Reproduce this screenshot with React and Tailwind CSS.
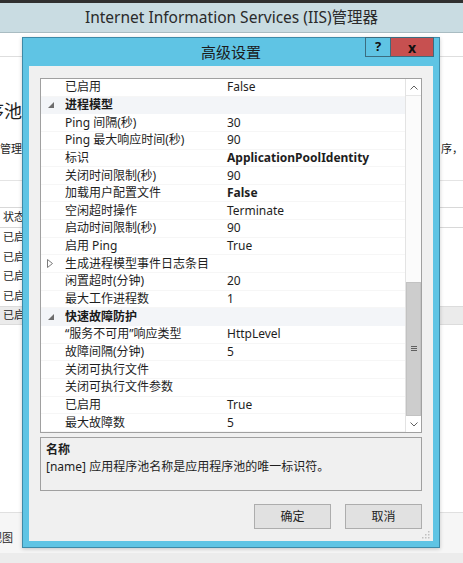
import React from 'react';

const rows = [
  { k: '已启用', v: 'False' },
  { cat: '进程模型' },
  { k: 'Ping 间隔(秒)', v: '30' },
  { k: 'Ping 最大响应时间(秒)', v: '90' },
  { k: '标识', v: 'ApplicationPoolIdentity', bold: true },
  { k: '关闭时间限制(秒)', v: '90' },
  { k: '加载用户配置文件', v: 'False', bold: true },
  { k: '空闲超时操作', v: 'Terminate' },
  { k: '启动时间限制(秒)', v: '90' },
  { k: '启用 Ping', v: 'True' },
  { k: '生成进程模型事件日志条目', collapsed: true },
  { k: '闲置超时(分钟)', v: '20' },
  { k: '最大工作进程数', v: '1' },
  { cat: '快速故障防护' },
  { k: '“服务不可用”响应类型', v: 'HttpLevel' },
  { k: '故障间隔(分钟)', v: '5' },
  { k: '关闭可执行文件', v: '' },
  { k: '关闭可执行文件参数', v: '' },
  { k: '已启用', v: 'True' },
  { k: '最大故障数', v: '5' },
];

function ExpandedGlyph() {
  return (
    <svg width="6" height="6" viewBox="0 0 6 6" className="block">
      <polygon points="6,0 6,6 0,6" fill="#6d6d6d" />
    </svg>
  );
}

function CollapsedGlyph() {
  return (
    <svg width="6" height="9" viewBox="0 0 6 9" className="block">
      <polygon points="0.5,0.5 5.5,4.5 0.5,8.5" fill="none" stroke="#7a7a7a" strokeWidth="1" />
    </svg>
  );
}

function PropRow({ row }) {
  if (row.cat) {
    return (
      <div className="h-[17.65px] flex items-center bg-[#f3f5f8]">
        <div className="w-[24px] flex justify-end pr-[11px]">
          <ExpandedGlyph />
        </div>
        <span className="font-bold text-[#1a1a1a]">{row.cat}</span>
      </div>
    );
  }
  return (
    <div className="h-[17.65px] flex items-center border-b border-[#f6f6f6]">
      <div className="w-[24px] flex justify-end pr-[12px]">
        {row.collapsed && <CollapsedGlyph />}
      </div>
      <div className="w-[162px] whitespace-nowrap">{row.k}</div>
      <div className={`whitespace-nowrap ${row.bold ? 'font-bold' : ''}`}>{row.v}</div>
    </div>
  );
}

function Scrollbar() {
  return (
    <div className="w-[16px] flex flex-col border-l border-[#e3e3e3] bg-[#fbfbfb]">
      <div className="h-[17px] flex items-center justify-center bg-white border-b border-[#e6e6e6]">
        <svg width="8" height="5" viewBox="0 0 8 5">
          <polyline points="0.5,4.5 4,1 7.5,4.5" fill="none" stroke="#606060" strokeWidth="1" />
        </svg>
      </div>
      <div className="h-[186px]" />
      <div className="flex-1 bg-[#cdcdcd] border border-[#c2c2c2] flex items-center justify-center">
        <svg width="6" height="6" viewBox="0 0 6 6">
          <line x1="0" y1="0.5" x2="6" y2="0.5" stroke="#606060" />
          <line x1="0" y1="2.5" x2="6" y2="2.5" stroke="#606060" />
          <line x1="0" y1="4.5" x2="6" y2="4.5" stroke="#606060" />
        </svg>
      </div>
      <div className="h-[16px] flex items-center justify-center bg-white">
        <svg width="8" height="5" viewBox="0 0 8 5">
          <polyline points="0.5,0.5 4,4 7.5,0.5" fill="none" stroke="#606060" strokeWidth="1" />
        </svg>
      </div>
    </div>
  );
}

function Background() {
  return (
    <div className="flex flex-col h-full text-[#1e1e1e]">
      <div className="h-[3px] bg-[#303030]" />
      <div className="h-[30px] bg-[#c9dce2] border-b border-[#a9bcc2] flex items-center justify-center text-[15.5px] text-[#2a2a2a]">
        Internet Information Services (IIS)管理器
      </div>
      <div className="h-[24px] bg-white border-b border-[#dedede]" />
      <div className="h-[123px] flex flex-col pt-[43px]">
        <div className="flex h-[22px] leading-[22px] text-[18px]">
          <div className="w-[22px] flex justify-end overflow-hidden whitespace-nowrap">应用程序池</div>
        </div>
        <div className="flex h-[14px] leading-[14px] text-[11px] mt-[20px]">
          <div className="w-[22px] flex justify-end overflow-hidden whitespace-nowrap">可以管理</div>
          <div className="flex-1" />
          <div className="w-[22px] overflow-hidden whitespace-nowrap">序，并且</div>
        </div>
      </div>
      <div className="h-[27px] border-t border-[#e4e4e4]" />
      <div className="h-[21px] border-t border-b border-[#d8d8d8] flex items-center text-[11px] px-[3px]">状态</div>
      {['已启动', '已启动', '已启动', '已启动'].map((t, i) => (
        <div key={i} className="h-[19.4px] flex items-center text-[11px] px-[3px]">{t}</div>
      ))}
      <div className="h-[19.4px] flex items-center text-[11px] px-[3px] bg-[#ebebeb] border-y border-[#dcdcdc]">已启动</div>
      <div className="flex-1 bg-white border-b border-[#e0e0e0]" />
      <div className="h-[40px] bg-[#f6f6f6] flex items-center text-[11px] pt-[10px]">
        <div className="w-[13px] flex justify-end overflow-hidden whitespace-nowrap">内容视图</div>
      </div>
      <div className="h-[10px] bg-[#ececec]" />
    </div>
  );
}

export default function App() {
  return (
    <div
      className="relative w-[463px] h-[563px] overflow-hidden bg-white"
      style={{ fontFamily: "'Noto Sans', 'Noto Sans CJK SC', sans-serif" }}
    >
      <Background />

      {/* advanced settings dialog */}
      <div className="absolute left-[22px] top-[37px] w-[418px] h-[511px] border border-[#3d8aa8] bg-[#5fc4e4] flex flex-col shadow-[0_1px_4px_rgba(0,0,0,0.2)]">
        <div className="relative h-[28px] flex items-center justify-center text-[15px] text-[#1b1b1b]">
          高级设置
          <div className="absolute right-[5px] top-[-1px] flex">
            <div className="w-[26px] h-[20px] border border-[#3b6d80] bg-[#5fc4e4] flex items-center justify-center text-[13px] font-bold text-[#111]">?</div>
            <div className="w-[43px] h-[20px] border border-l-0 border-[#3b6d80] bg-[#c75050] flex items-center justify-center text-[14px] font-bold text-[#111]">x</div>
          </div>
        </div>
        <div className="flex-1 mx-[6px] mb-[6px] bg-[#f0f0f0] flex flex-col px-[11px] pt-[12px] text-[12px] text-[#1e1e1e]">
          <div className="h-[355px] border border-[#a0a0a0] bg-white flex">
            <div className="flex-1 flex flex-col">
              {rows.map((r, i) => (
                <PropRow key={i} row={r} />
              ))}
            </div>
            <Scrollbar />
          </div>
          <div className="mt-[4px] h-[54px] border border-[#a0a0a0] px-[5px] pt-[3px] leading-[17px]">
            <div className="font-bold">名称</div>
            <div>[name] 应用程序池名称是应用程序池的唯一标识符。</div>
          </div>
          <div className="mt-[13px] flex justify-end gap-[14px]">
            <button className="w-[77px] h-[25px] bg-[#e1e1e1] border border-[#adadad] text-[12px]">确定</button>
            <button className="w-[77px] h-[25px] bg-[#e1e1e1] border border-[#adadad] text-[12px]">取消</button>
          </div>
          <div className="flex-1 flex justify-end items-end pb-[2px] mr-[-8px]">
            <svg width="8" height="8" viewBox="0 0 8 8">
              <rect x="6" y="0" width="1.5" height="1.5" fill="#c0c0c0" />
              <rect x="3" y="3" width="1.5" height="1.5" fill="#c0c0c0" />
              <rect x="6" y="3" width="1.5" height="1.5" fill="#c0c0c0" />
              <rect x="0" y="6" width="1.5" height="1.5" fill="#c0c0c0" />
              <rect x="3" y="6" width="1.5" height="1.5" fill="#c0c0c0" />
              <rect x="6" y="6" width="1.5" height="1.5" fill="#c0c0c0" />
            </svg>
          </div>
        </div>
      </div>
    </div>
  );
}
